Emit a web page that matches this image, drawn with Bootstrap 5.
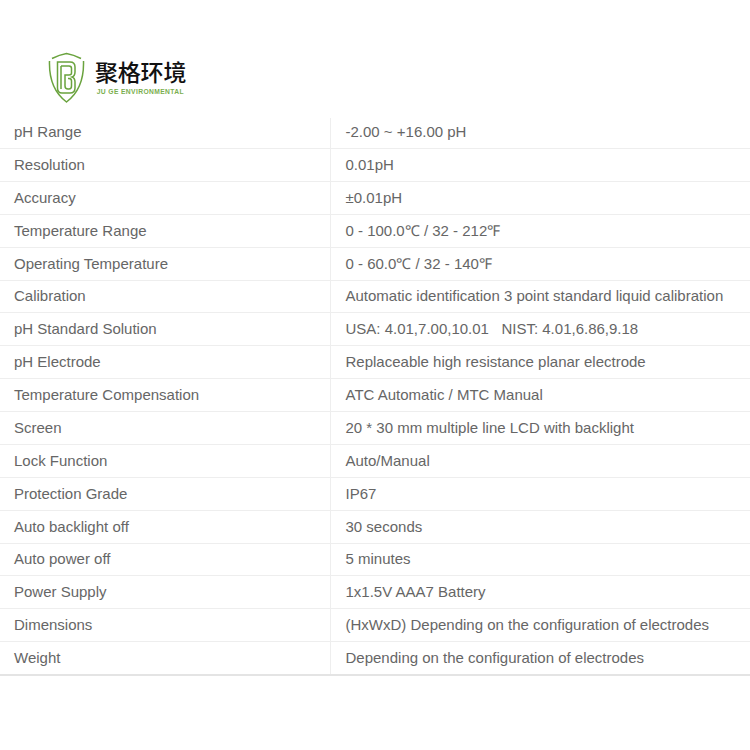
<!DOCTYPE html>
<html lang="zh"><head><meta charset="utf-8"><title>JU GE</title>
<link href="https://cdn.jsdelivr.net/npm/bootstrap@5.3.0/dist/css/bootstrap.min.css" rel="stylesheet">
<style>
body{font-family:"Liberation Sans",Arial,sans-serif;background:#fff;color:#666;overflow:hidden}
.logo-wrap{padding:52px 0 0 48px;height:118px;gap:9px}
.logo-text{padding-top:5px}
.logo-cn{font-family:"Noto Sans CJK SC",sans-serif;font-size:23px;font-weight:500;color:#111;line-height:28px;letter-spacing:-.2px;white-space:nowrap}
.logo-en{font-family:"Liberation Sans",sans-serif;font-size:8px;font-weight:700;color:#7aae4e;line-height:10px;letter-spacing:.45px;white-space:nowrap;margin-top:2px;padding-left:2px;transform:scaleX(.84);transform-origin:left}
.spec-table{width:100%;margin:0;table-layout:fixed;border-collapse:collapse;border-bottom:2px solid #e4e4e4}
.spec-table td{font-size:15px;color:#666;height:32.875px;padding:0 0 0 14px;border:0;border-bottom:1px solid #eee;line-height:20px;vertical-align:middle;white-space:nowrap}
.spec-table tr:first-child td{height:30.55px;padding-bottom:2px}
.spec-table tr:last-child td{border-bottom:0}
.spec-table td:first-child{width:330px}
.spec-table td:last-child{border-left:1px solid #eee;padding-left:15px}
</style></head><body>
<div class="d-flex align-items-start logo-wrap">
<svg width="38" height="52" viewBox="0 0 38 52" fill="none" stroke="#6aa33e" stroke-width="1.500">
<path d="M1.500 9C1 25 5 40 18.500 50C32 40 36 25 35.500 9"/>
<path d="M4 6.500C9 4 13 2.500 18.500 1.500C24 2.500 28 4 33 6.500"/>
<path d="M9.500 10H22Q27 10 27 15V20Q27 24 24 25Q27 26 27 30V36Q27 41 22 41H14Q9.500 41 9.500 36Z"/>
<path d="M13 14V37M13 14H21Q23.500 14 23.500 16.500V21Q23.500 23 21 23H17V34Q17 37 20 37H21Q23.500 37 23.500 34V29Q23.500 26.500 21 26.500H20"/>
</svg>
<div class="logo-text"><div class="logo-cn">聚格环境</div><div class="logo-en">JU GE ENVIRONMENTAL</div></div>
</div>
<table class="table spec-table"><tbody>
<tr><td>pH Range</td><td>-2.00 ~ +16.00 pH</td></tr>
<tr><td>Resolution</td><td>0.01pH</td></tr>
<tr><td>Accuracy</td><td>±0.01pH</td></tr>
<tr><td>Temperature Range</td><td>0 - 100.0℃ / 32 - 212℉</td></tr>
<tr><td>Operating Temperature</td><td>0 - 60.0℃ / 32 - 140℉</td></tr>
<tr><td>Calibration</td><td>Automatic identification 3 point standard liquid calibration</td></tr>
<tr><td>pH Standard Solution</td><td>USA: 4.01,7.00,10.01 &nbsp; NIST: 4.01,6.86,9.18</td></tr>
<tr><td>pH Electrode</td><td>Replaceable high resistance planar electrode</td></tr>
<tr><td>Temperature Compensation</td><td>ATC Automatic / MTC Manual</td></tr>
<tr><td>Screen</td><td>20 * 30 mm multiple line LCD with backlight</td></tr>
<tr><td>Lock Function</td><td>Auto/Manual</td></tr>
<tr><td>Protection Grade</td><td>IP67</td></tr>
<tr><td>Auto backlight off</td><td>30 seconds</td></tr>
<tr><td>Auto power off</td><td>5 minutes</td></tr>
<tr><td>Power Supply</td><td>1x1.5V AAA7 Battery</td></tr>
<tr><td>Dimensions</td><td>(HxWxD) Depending on the configuration of electrodes</td></tr>
<tr><td>Weight</td><td>Depending on the configuration of electrodes</td></tr>
</tbody></table>
<script src="https://cdn.jsdelivr.net/npm/bootstrap@5.3.0/dist/js/bootstrap.bundle.min.js"></script>
</body></html>
